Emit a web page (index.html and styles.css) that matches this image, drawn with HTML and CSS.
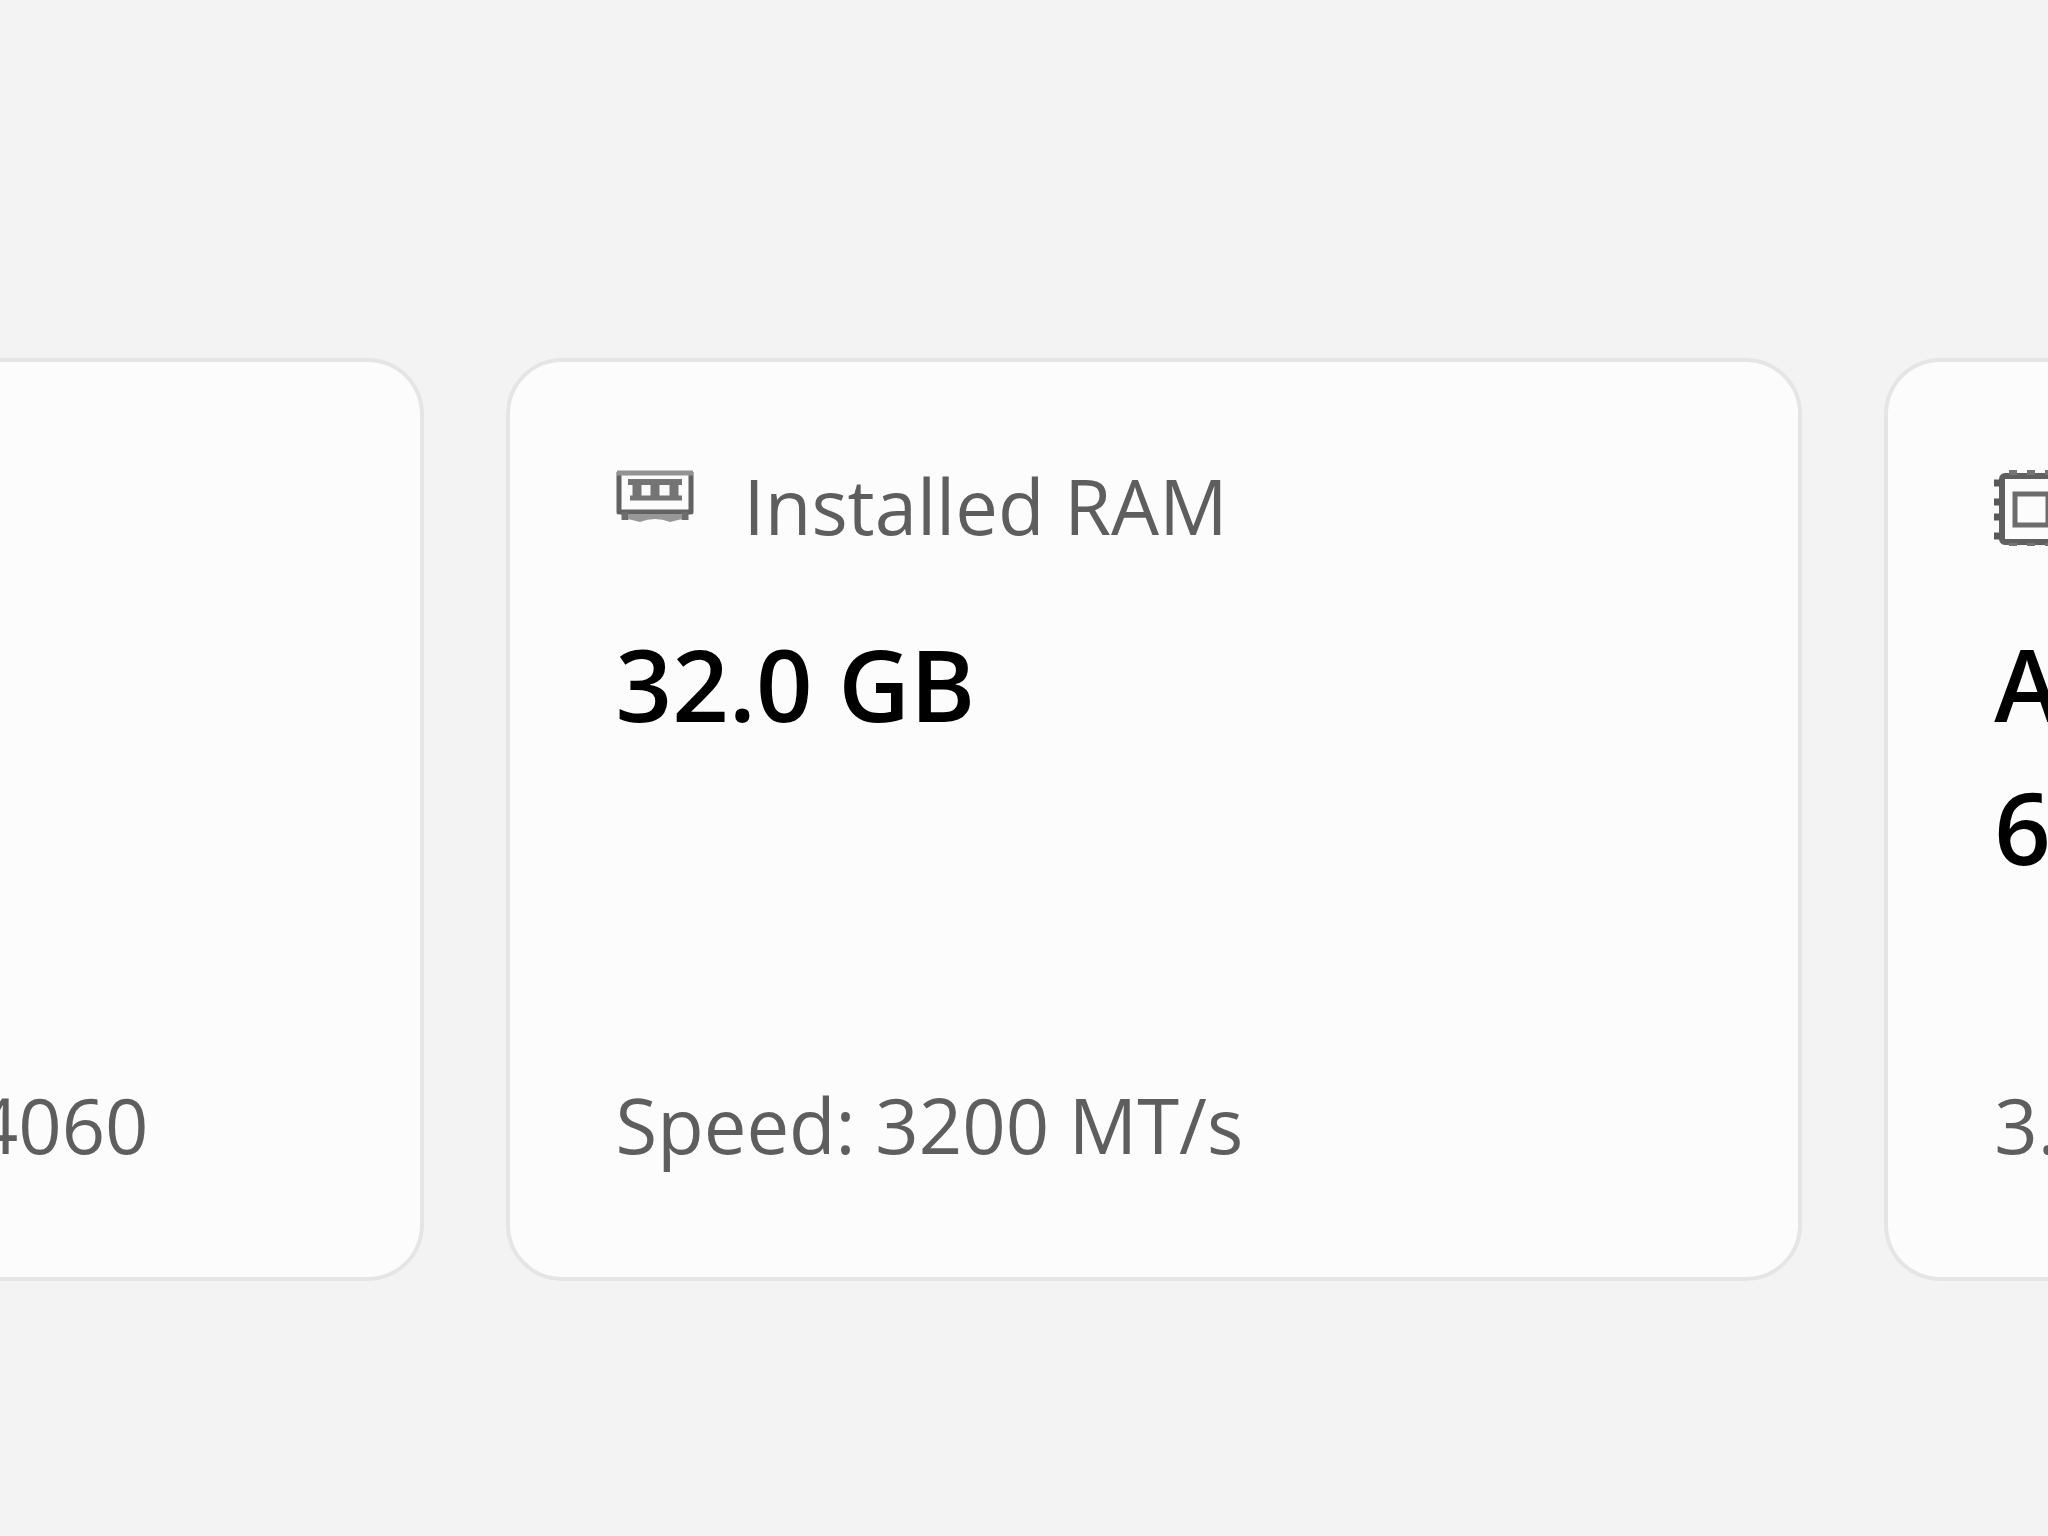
FILE: index.html
```
<!DOCTYPE html>
<html lang="en">
<head>
    <meta charset="UTF-8">
    <meta name="viewport" content="width=device-width, initial-scale=1.0">
    <title>System info</title>
    <link rel="stylesheet" href="styles.css">
</head>
<body>

    <main class="cards">
        <!-- Graphics card, scrolled off to the left -->
        <section class="card card-left">
            <p class="detail">4060</p>
        </section>

        <!-- Memory -->
        <section class="card">
            <header class="card-head">
                <svg class="icon" viewBox="0 0 80 80" aria-hidden="true">
                    <path d="M3 6V46H75V6" fill="none" stroke="#626262" stroke-width="5" stroke-linejoin="round"/>
                    <path d="M1 7H77" stroke="#929292" stroke-width="5"/>
                    <path d="M9 46V54M69 46V54" stroke="#6c6c6c" stroke-width="7"/>
                    <path d="M12 48H66V53L54 56Q39 50 24 56L12 53Z" fill="#989898"/>
                    <path d="M12 16H66" stroke="#747474" stroke-width="6"/>
                    <path d="M14 32H66" stroke="#747474" stroke-width="5"/>
                    <path d="M21 17V33M39 17V33M58 17V33" stroke="#747474" stroke-width="9"/>
                </svg>
                <h2 class="label">Installed RAM</h2>
            </header>
            <p class="value">32.0 GB</p>
            <p class="detail">Speed: 3200 MT/s</p>
        </section>

        <!-- Processor, scrolled off to the right -->
        <section class="card card-right">
            <header class="card-head">
                <svg class="icon" viewBox="0 0 80 80" aria-hidden="true">
                    <rect x="8" y="10" width="62" height="66" rx="3" fill="none" stroke="#606060" stroke-width="6"/>
                    <rect x="21" y="28" width="33" height="31" fill="none" stroke="#6c6c6c" stroke-width="5"/>
                    <path d="M0 17H6M0 36H6M0 51H6M0 70H6M72 17H78M72 36H78M72 51H78M72 70H78" stroke="#585858" stroke-width="7"/>
                    <path d="M19 4V9M37 4V9M55 4V9M19 77V80M37 77V80M55 77V80" stroke="#747474" stroke-width="8"/>
                </svg>
            </header>
            <p class="value">A<br>6</p>
            <p class="detail">3.</p>
        </section>
    </main>

</body>
</html>
```
FILE: styles.css
```
body {
    font-family: "Open Sans", "Noto Sans", sans-serif;
    background-color: #f3f3f3;
    color: #5e5e5e;
    margin: 0;
    overflow-x: hidden;
}
.cards {
    display: grid;
    grid-template-columns: minmax(0, 424fr) minmax(0, 1298fr) minmax(0, 164fr);
    gap: 82px;
    padding: 358px 0 255px;
}
.card {
    display: flex;
    flex-direction: column;
    box-sizing: border-box;
    min-height: 923px;
    padding: 94px 106px 102px;
    background-color: #fcfcfc;
    border: 4px solid #e5e5e5;
    border-radius: 56px;
    white-space: nowrap;
    overflow: hidden;
}
.card-left {
    border-left: none;
    border-radius: 0 56px 56px 0;
    padding-left: 0;
    padding-right: 271px;
    align-items: flex-end;
}
.card-right {
    border-right: none;
    border-radius: 56px 0 0 56px;
    padding-right: 0;
}
.card-head {
    display: flex;
    align-items: center;
    gap: 48px;
    height: 100px;
    margin-bottom: 56px;
}
.icon {
    flex: none;
    width: 80px;
    height: 80px;
}
.label,
.detail {
    margin: 0;
    font-size: 76px;
    font-weight: 400;
    line-height: 100px;
}
.value {
    margin: 0;
    color: #000;
    font-size: 99px;
    font-weight: 600;
    line-height: 143px;
}
.detail {
    margin-top: auto;
}
```
